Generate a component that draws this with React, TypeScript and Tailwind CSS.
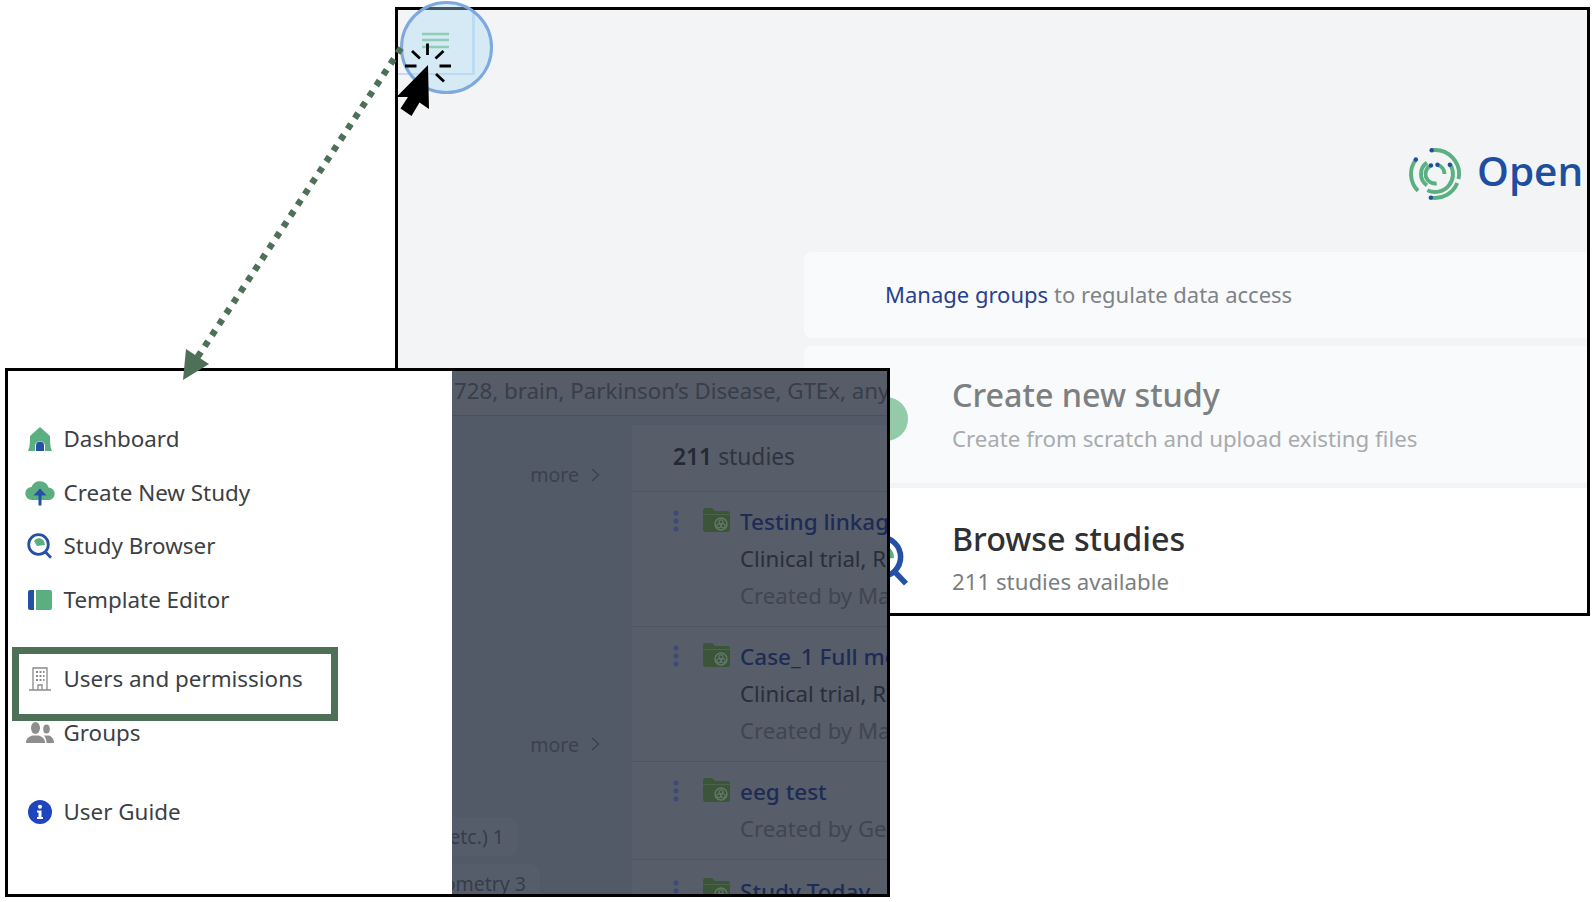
import React from "react";

const pt = (r: number, a: number, c = 27) => {
  const t = (a * Math.PI) / 180;
  return [c + r * Math.sin(t), c - r * Math.cos(t)];
};
const arc = (r: number, a0: number, a1: number) => {
  const [x0, y0] = pt(r, a0);
  const [x1, y1] = pt(r, a1);
  return `M${x0.toFixed(2)} ${y0.toFixed(2)}A${r} ${r} 0 ${a1 - a0 > 180 ? 1 : 0} 1 ${x1.toFixed(2)} ${y1.toFixed(2)}`;
};

function Logo() {
  const arcs: [number, number, number][] = [
    [24, -8, 102],
    [24, 112, 190],
    [24, 225, 307],
    [18, 58, 205],
    [14, 215, 325],
    [9.5, 170, 335],
    [9.5, 15, 90],
  ];
  const dots: [number, number][] = [
    [24, -8],
    [24, 190],
    [24, -53],
    [17.5, 58],
    [9.5, -25],
    [9.5, 15],
  ];
  return (
    <svg width="54" height="54" viewBox="0 0 54 54" className="shrink-0">
      {arcs.map(([r, a, b], i) => (
        <path key={i} d={arc(r, a, b)} fill="none" stroke="#5bb082" strokeWidth="3.9" />
      ))}
      {dots.map(([r, a], i) => {
        const [x, y] = pt(r, a);
        return <circle key={i} cx={x} cy={y} r="2.2" fill="#1f4ea0" />;
      })}
    </svg>
  );
}

const HomeIcon = () => (
  <svg width="24" height="24" viewBox="0 0 24 24">
    <path d="M0 24C2 20 2 14 2 9L12 0l10 9c0 5 0 11 2 15H17v-5a5 5 0 0 0-10 0v5z" fill="#5bae80" />
    <path d="M8 24v-5.500a4 4 0 0 1 8 0V24z" fill="#2450a5" />
  </svg>
);
const CloudIcon = () => (
  <svg width="31" height="26" viewBox="0 0 31 26">
    <path d="M7 20a6.500 6.500 0 0 1-.5-13 9 9 0 0 1 17 .5A6.300 6.300 0 0 1 24.500 20z" fill="#5bae80" />
    <path d="M13.500 25.500V15.500h-5L15 8.500l6.500 7h-5v10z" fill="#2450a5" />
  </svg>
);
const LensIcon = ({ s = 26 }: { s?: number }) => (
  <svg width={s} height={s} viewBox="0 0 26 26">
    <path d="M12 5a7 7 0 0 1 6 7 l-8 1-3-5a7 7 0 0 1 5-3z" fill="#5bae80" />
    <circle cx="11.500" cy="11.500" r="9.800" fill="none" stroke="#2450a5" strokeWidth="2.800" />
    <path d="M18.500 19l5.500 5.800" stroke="#2450a5" strokeWidth="2.800" />
  </svg>
);
const BookIcon = () => (
  <svg width="24" height="20" viewBox="0 0 24 20">
    <path d="M6 0v20H2a2 2 0 0 1-2-2V2a2 2 0 0 1 2-2z" fill="#2450a5" />
    <path d="M8 0h14a2 2 0 0 1 2 2v16a2 2 0 0 1-2 2H8z" fill="#5bae80" />
  </svg>
);
const BuildingIcon = () => (
  <svg width="22" height="24" viewBox="0 0 22 24" fill="none" stroke="#8a8a8a" strokeWidth="1.300">
    <path d="M4 23V1h14v22M0 23h22" />
    <path d="M7 5h2M10.500 5h2M14 5h1.500M7 9h2M10.500 9h2M14 9h1.500M7 13h2M10.500 13h2M14 13h1.500" strokeWidth="1.800" />
    <path d="M9 23v-5h4v5" />
  </svg>
);
const GroupIcon = () => (
  <svg width="28" height="21" viewBox="0 0 28 21" fill="#8e8e8e">
    <ellipse cx="9.500" cy="6" rx="4.500" ry="6" />
    <path d="M0 21c0-4 2-6 6.500-7.500h6C17 15 19 17 19 21z" />
    <ellipse cx="20.500" cy="7" rx="3.300" ry="4.500" />
    <path d="M20.500 21c0-3-1-5.500-2.500-7.500h5c3 1 5 3.500 5 7.500z" />
  </svg>
);
const InfoIcon = () => (
  <svg width="24" height="24" viewBox="0 0 24 24">
    <circle cx="12" cy="12" r="12" fill="#1f44c0" />
    <circle cx="12" cy="6.800" r="2" fill="#fff" />
    <path d="M9 10.500h4.500V17H15v2H9v-2h1.500v-4.500H9z" fill="#fff" />
  </svg>
);
const FolderIcon = () => (
  <svg width="27" height="25" viewBox="0 0 27 25" className="shrink-0">
    <path d="M0 4a3 3 0 0 1 3-3h6l3 3h12a3 3 0 0 1 3 3v15a3 3 0 0 1-3 3H3a3 3 0 0 1-3-3z" fill="#3a5538" />
    <path d="M0 7.500h27" stroke="#4b6347" strokeWidth="1" />
    <circle cx="18" cy="17" r="6" fill="none" stroke="#64766a" strokeWidth="1.500" />
    <circle cx="15.800" cy="18.800" r="2" fill="none" stroke="#64766a" strokeWidth="1.200" />
    <circle cx="20.200" cy="18.800" r="2" fill="none" stroke="#64766a" strokeWidth="1.200" />
    <circle cx="18" cy="14.800" r="2" fill="none" stroke="#64766a" strokeWidth="1.200" />
  </svg>
);
const Kebab = () => (
  <svg width="6" height="22" viewBox="0 0 6 22" className="shrink-0">
    <circle cx="3" cy="3" r="2.500" fill="#3c4a78" />
    <circle cx="3" cy="11" r="2.500" fill="#3c4a78" />
    <circle cx="3" cy="19" r="2.500" fill="#3c4a78" />
  </svg>
);

function MenuRow({ icon, label, className = "" }: { icon: React.ReactNode; label: string; className?: string }) {
  return (
    <div className={`flex h-[53.5px] items-center ${className}`}>
      <div className="flex w-[55.5px] shrink-0 justify-center pl-[12px] pr-[3px]">{icon}</div>
      <span className="whitespace-nowrap">{label}</span>
    </div>
  );
}

function More({ className = "" }: { className?: string }) {
  return (
    <div className={`flex items-center justify-end gap-[12px] pr-[32px] text-[19.500px] leading-none text-[#3b414d] ${className}`}>
      more
      <svg width="9" height="14" viewBox="0 0 9 14" fill="none" stroke="#3b414d" strokeWidth="1.400">
        <path d="M1 1l6.500 6L1 13" />
      </svg>
    </div>
  );
}

function Study({ title, lines, h, top }: { title: string; lines: [string, string][]; h: string; top: string }) {
  return (
    <div className={`flex border-b border-[#4e5561] pl-[41px] ${h} ${top}`}>
      <div className="pt-[3px]">
        <Kebab />
      </div>
      <div className="ml-[24px]">
        <FolderIcon />
      </div>
      <div className="ml-[10px] flex min-w-0 flex-col whitespace-nowrap">
        <span className="h-[30px] text-[22.500px] leading-[30px] font-medium text-[#1d2b56]">{title}</span>
        {lines.map(([t, c]) => (
          <span key={t} className={`mt-[7px] h-[30px] text-[22.200px] leading-[30px] ${c}`}>
            {t}
          </span>
        ))}
      </div>
    </div>
  );
}

export default function App() {
  return (
    <div className="relative h-[902px] w-[1596px] overflow-hidden bg-white font-['Noto_Sans',sans-serif]">
      {/* background application window */}
      <div className="absolute left-[395px] top-[7px] flex h-[609px] w-[1195px] flex-col overflow-hidden border-[3px] border-black bg-[#f3f4f6]">
        <div className="h-[65px] w-[77px] shrink-0 border-b-[2px] border-r-[3px] border-[#c9d9f2]" />
        <div className="flex h-[177px] shrink-0 items-start pl-[1010px] pt-[72px]">
          <Logo />
          <span className="ml-[15px] mt-[0px] font-['Open_Sans',sans-serif] text-[40.500px] leading-[48px] font-semibold text-[#1f4ea0]">
            Open
          </span>
        </div>
        <div className="ml-[406px] flex flex-col">
          <div className="flex h-[86px] items-center rounded-l-[8px] bg-[#f9fafb] pb-[2px] pl-[81px] text-[22px] text-[#7f8388]">
            <span className="text-[#28408f]">Manage groups</span>
            <span className="ml-[6px]">to regulate data access</span>
          </div>
          <div className="mt-[8px] flex h-[137px] items-center rounded-l-[8px] bg-[#f9fafb] pl-[60px]">
            <div className="mt-[9px] h-[44px] w-[44px] shrink-0 rounded-full bg-[#93cba8]" />
            <div className="ml-[44px] flex flex-col pt-[3px]">
              <span className="text-[32.300px] leading-[42px] font-medium text-[#7c8080]">Create new study</span>
              <span className="mt-[3px] text-[22.250px] leading-[42px] text-[#a8abad]">Create from scratch and upload existing files</span>
            </div>
          </div>
          <div className="mt-[5px] flex h-[130px] items-center bg-white pl-[54px] pt-[13px]">
            <LensIcon s={52} />
            <div className="ml-[42px] flex flex-col">
              <span className="text-[32.300px] leading-[42px] font-medium text-[#2e3033]">Browse studies</span>
              <span className="mt-[2px] text-[22.250px] leading-[42px] text-[#7b7e81]">211 studies available</span>
            </div>
          </div>
        </div>
      </div>

      {/* foreground window with the open drawer */}
      <div className="absolute left-[5px] top-[368px] flex h-[529px] w-[885px] overflow-hidden border-[3px] border-black bg-white">
        <div className="w-[444px] shrink-0 pt-[41.500px] text-[22.400px] text-[#3c3f44]">
          <MenuRow icon={<HomeIcon />} label="Dashboard" />
          <MenuRow icon={<CloudIcon />} label="Create New Study" />
          <MenuRow icon={<LensIcon />} label="Study Browser" />
          <MenuRow icon={<BookIcon />} label="Template Editor" />
          <MenuRow className="mt-[26px]" icon={<BuildingIcon />} label="Users and permissions" />
          <MenuRow icon={<GroupIcon />} label="Groups" />
          <MenuRow className="mt-[26px]" icon={<InfoIcon />} label="User Guide" />
        </div>
        <div className="flex min-w-0 flex-1 flex-col bg-[#525a67]">
          <div className="flex h-[45px] shrink-0 items-center overflow-hidden whitespace-nowrap border-b border-[#4a515d] bg-[#565c68] pb-[4px] pl-[2px] text-[22.300px] text-[#383e4a]">
            728, brain, Parkinson’s Disease, GTEx, any
          </div>
          <div className="flex min-h-0 flex-1">
            <div className="w-[180px] shrink-0 overflow-hidden">
              <More className="mt-[49px]" />
              <More className="mt-[250px]" />
              <div className="mt-[63px] flex h-[39px] w-[66px] items-center justify-end whitespace-nowrap rounded-r-[10px] bg-[#565d6a] pr-[14px] text-[19.500px] text-[#363c48]">
                etc.) 1
              </div>
              <div className="mt-[8px] flex h-[39px] w-[88px] items-center justify-end overflow-hidden whitespace-nowrap rounded-r-[10px] bg-[#565d6a] pr-[14px] text-[19.500px] text-[#363c48]">
                ometry 3
              </div>
            </div>
            <div className="mt-[9px] min-w-0 flex-1 overflow-hidden bg-[#575d69]">
              <div className="flex h-[67px] items-center border-b border-[#4e5561] pb-[2px] pl-[41px] text-[22.800px] text-[#2f353f]">
                <span className="font-semibold text-[#232935]">211</span>
                <span className="ml-[6px]">studies</span>
              </div>
              <Study
                h="h-[135px]"
                top="pt-[15px]"
                title="Testing linkage"
                lines={[
                  ["Clinical trial, RNA", "text-[#292f3a]"],
                  ["Created by Mary", "text-[#404651]"],
                ]}
              />
              <Study
                h="h-[135px]"
                top="pt-[15px]"
                title="Case_1 Full model"
                lines={[
                  ["Clinical trial, RNA", "text-[#292f3a]"],
                  ["Created by Mary", "text-[#404651]"],
                ]}
              />
              <Study h="h-[98px]" top="pt-[15px]" title="eeg test" lines={[["Created by George", "text-[#404651]"]]} />
              <Study h="h-[60px]" top="pt-[17px]" title="Study Today" lines={[]} />
            </div>
          </div>
        </div>
      </div>

      {/* green highlight around the menu item */}
      <div className="absolute left-[12px] top-[647px] h-[74px] w-[326px] border-[7px] border-[#4f7058]" />

      {/* annotation: click marker on the hamburger */}
      <div className="absolute left-[400px] top-[1px] h-[93px] w-[93px] rounded-full border-[3px] border-[#7fa9dc] bg-[#a9dcf5]/40" />
      <svg className="pointer-events-none absolute left-0 top-0" width="1596" height="902" viewBox="0 0 1596 902">
        <path d="M422 34h27M422 40h27M422 47h27" stroke="#8fcdb5" strokeWidth="2.500" />
        <path d="M428 65L396.500 97H408L400.500 108.500L411.500 116L419.500 102.500L429 109z" fill="#000" />
        <path
          d="M427.500 43.500V55M412 51l8 7.500M443.500 51l-8 7.500M405 66h11.500M439.500 66h11.500M436 74l8 7.500"
          stroke="#000"
          strokeWidth="2.800"
          fill="none"
        />
        <path d="M401 48L197 358" stroke="#4f7058" strokeWidth="6.500" strokeDasharray="6 7" fill="none" />
        <path d="M186 349L209 364L183 380z" fill="#4f7058" />
      </svg>
    </div>
  );
}
